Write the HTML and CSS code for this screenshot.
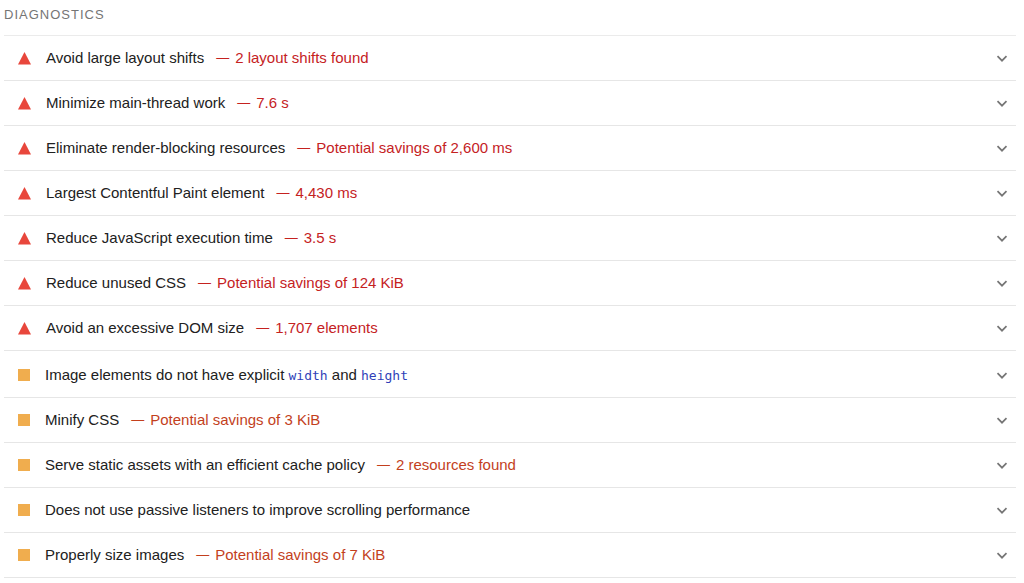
FILE: index.html
```html
<!DOCTYPE html>
<html lang="en">
<head>
    <meta charset="UTF-8">
    <meta name="viewport" content="width=device-width, initial-scale=1.0">
    <title>Diagnostics</title>
    <link rel="stylesheet" href="styles.css">
</head>
<body>
    <svg class="defs" width="0" height="0" aria-hidden="true">
        <symbol id="chevron" viewBox="0 0 12 8">
            <path d="M1.5 2.2 6 6.7l4.5-4.5" fill="none" stroke="#757575" stroke-width="1.7"/>
        </symbol>
        <symbol id="triangle" viewBox="0 0 13 13">
            <path d="M6.5 0 13 12.500H0z" fill="#e8473c"/>
        </symbol>
    </svg>
    <main class="diagnostics">
        <h1>DIAGNOSTICS</h1>
        <div class="group fail">
            <details>
                <summary><svg class="icon"><use href="#triangle"/></svg><span class="title">Avoid large layout shifts</span><span class="dash">—</span><span class="value">2 layout shifts found</span><svg class="chevron"><use href="#chevron"/></svg></summary>
            </details>
            <details>
                <summary><svg class="icon"><use href="#triangle"/></svg><span class="title">Minimize main-thread work</span><span class="dash">—</span><span class="value">7.6 s</span><svg class="chevron"><use href="#chevron"/></svg></summary>
            </details>
            <details>
                <summary><svg class="icon"><use href="#triangle"/></svg><span class="title">Eliminate render-blocking resources</span><span class="dash">—</span><span class="value">Potential savings of 2,600 ms</span><svg class="chevron"><use href="#chevron"/></svg></summary>
            </details>
            <details>
                <summary><svg class="icon"><use href="#triangle"/></svg><span class="title">Largest Contentful Paint element</span><span class="dash">—</span><span class="value">4,430 ms</span><svg class="chevron"><use href="#chevron"/></svg></summary>
            </details>
            <details>
                <summary><svg class="icon"><use href="#triangle"/></svg><span class="title">Reduce JavaScript execution time</span><span class="dash">—</span><span class="value">3.5 s</span><svg class="chevron"><use href="#chevron"/></svg></summary>
            </details>
            <details>
                <summary><svg class="icon"><use href="#triangle"/></svg><span class="title">Reduce unused CSS</span><span class="dash">—</span><span class="value">Potential savings of 124 KiB</span><svg class="chevron"><use href="#chevron"/></svg></summary>
            </details>
            <details>
                <summary><svg class="icon"><use href="#triangle"/></svg><span class="title">Avoid an excessive DOM size</span><span class="dash">—</span><span class="value">1,707 elements</span><svg class="chevron"><use href="#chevron"/></svg></summary>
            </details>
        </div>
        <div class="group average">
            <details>
                <summary><span class="icon"></span><span class="title">Image elements do not have explicit <code>width</code> and <code>height</code></span><svg class="chevron"><use href="#chevron"/></svg></summary>
            </details>
            <details>
                <summary><span class="icon"></span><span class="title">Minify CSS</span><span class="dash">—</span><span class="value">Potential savings of 3 KiB</span><svg class="chevron"><use href="#chevron"/></svg></summary>
            </details>
            <details>
                <summary><span class="icon"></span><span class="title">Serve static assets with an efficient cache policy</span><span class="dash">—</span><span class="value">2 resources found</span><svg class="chevron"><use href="#chevron"/></svg></summary>
            </details>
            <details>
                <summary><span class="icon"></span><span class="title">Does not use passive listeners to improve scrolling performance</span><svg class="chevron"><use href="#chevron"/></svg></summary>
            </details>
            <details>
                <summary><span class="icon"></span><span class="title">Properly size images</span><span class="dash">—</span><span class="value">Potential savings of 7 KiB</span><svg class="chevron"><use href="#chevron"/></svg></summary>
            </details>
        </div>
    </main>
</body>
</html>
```
FILE: styles.css
```css
body {
    margin: 0;
    background: #fff;
    color: #212121;
    font-family: "Liberation Sans", Arial, sans-serif;
    font-size: 15px;
    line-height: 20px;
}
.defs {
    display: block;
}
.diagnostics {
    padding: 5px 8px 0 4px;
}
h1 {
    margin: 0;
    padding-bottom: 10px;
    border-bottom: 1px solid #ebebeb;
    color: #757575;
    font-size: 13px;
    font-weight: normal;
    letter-spacing: 1px;
}
.group + .group {
    padding-top: 2px;
}
details {
    border-bottom: 1px solid #e6e6e6;
}
summary {
    display: flex;
    align-items: center;
    padding: 12px 8px 12px 14px;
    list-style: none;
    cursor: pointer;
}
.icon {
    flex: none;
    width: 13px;
    height: 13px;
    margin-right: 15px;
}
.average .icon {
    width: 12px;
    height: 12px;
    background: #f0ad4e;
}
.dash {
    margin: 0 6px 0 12px;
    font-size: 13px;
}
.fail .dash,
.fail .value {
    color: #c5221f;
}
.average .dash,
.average .value {
    color: #c33f1d;
}
code {
    color: #303fb8;
    font-family: "DejaVu Sans Mono", monospace;
    font-size: 13px;
    line-height: 16px;
}
.chevron {
    width: 12px;
    height: 8px;
    margin-left: auto;
}
```
